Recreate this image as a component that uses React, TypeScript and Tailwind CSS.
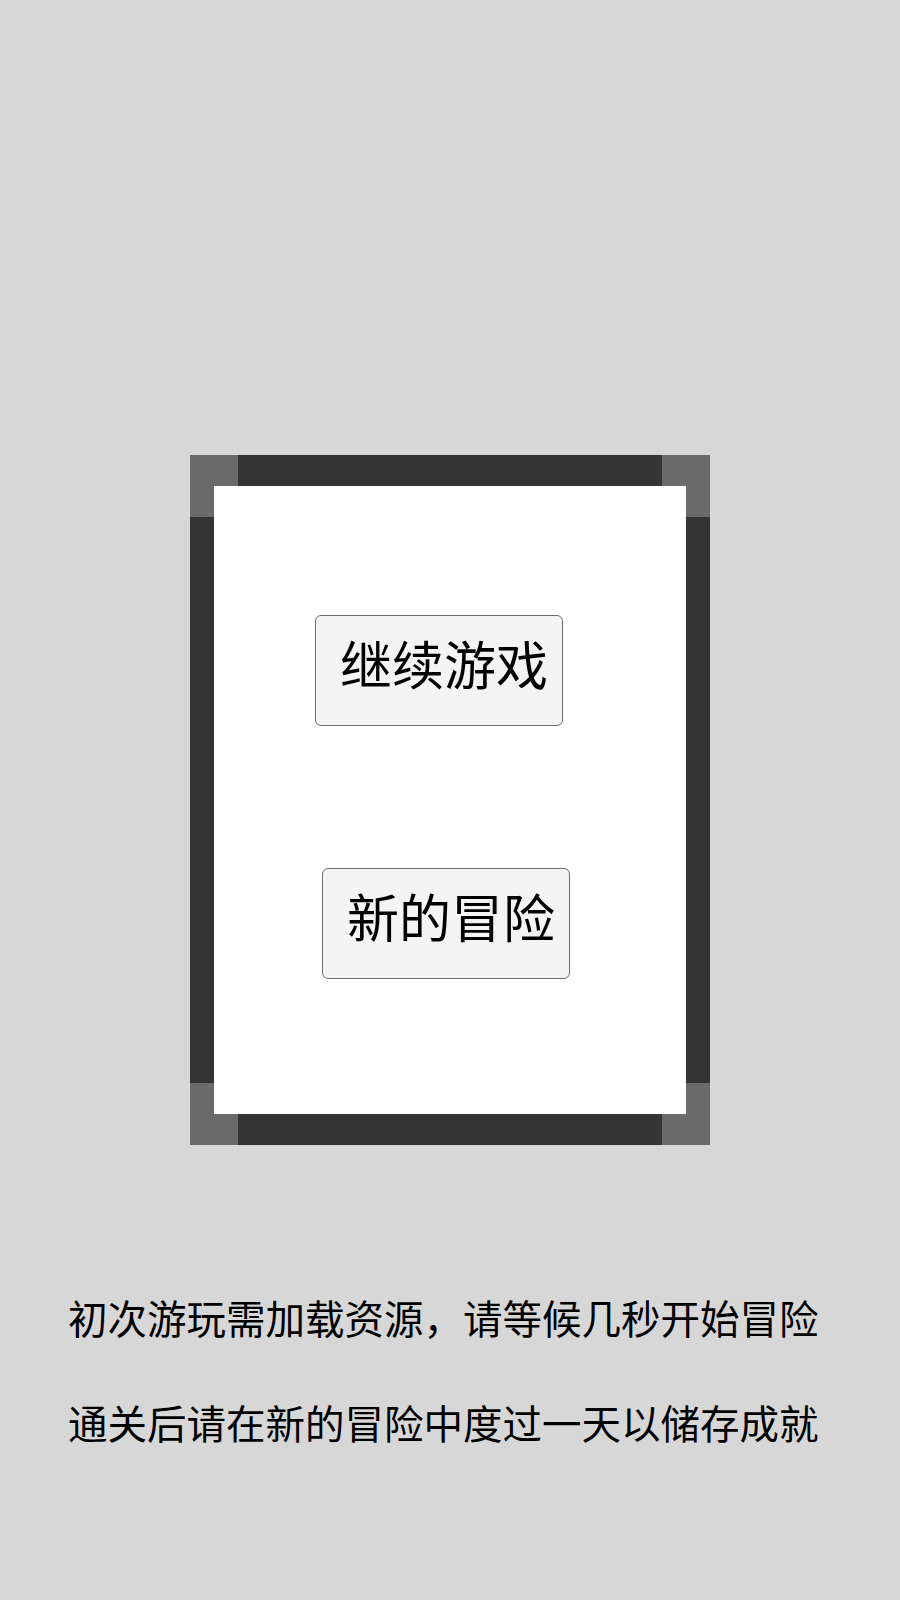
import React from "react";

const font = { fontFamily: '"Noto Sans CJK SC", "Noto Sans", sans-serif' };

function GameButton({ label, className }: { label: string; className: string }) {
  return (
    <button
      className={`flex h-[111px] w-[248px] items-start rounded-[6px] border border-[#6e6e6e] bg-[#f4f4f4] pl-[24px] pt-[21px] text-[52px] leading-[52px] text-black ${className}`}
      style={font}
    >
      {label}
    </button>
  );
}

export default function App() {
  return (
    <div className="min-h-[1600px] w-full bg-[#d7d7d7] pt-[455px]" style={font}>
      <div className="relative mx-auto w-[520px] bg-[#343434] px-[24px] py-[31px]">
        <div className="absolute left-0 top-0 h-[62px] w-[48px] bg-[#6a6a6a]" />
        <div className="absolute right-0 top-0 h-[62px] w-[48px] bg-[#6a6a6a]" />
        <div className="absolute bottom-0 left-0 h-[62px] w-[48px] bg-[#6a6a6a]" />
        <div className="absolute bottom-0 right-0 h-[62px] w-[48px] bg-[#6a6a6a]" />
        <div className="relative flex h-[628px] flex-col bg-white pt-[129px]">
          <GameButton label="继续游戏" className="ml-[101px]" />
          <GameButton label="新的冒险" className="ml-[108px] mt-[142px]" />
        </div>
      </div>
      <div className="mt-[152px] flex flex-col gap-[65px] pl-[68px] text-[39.5px] leading-[40px] text-black">
        <p>初次游玩需加载资源，请等候几秒开始冒险</p>
        <p>通关后请在新的冒险中度过一天以储存成就</p>
      </div>
    </div>
  );
}
